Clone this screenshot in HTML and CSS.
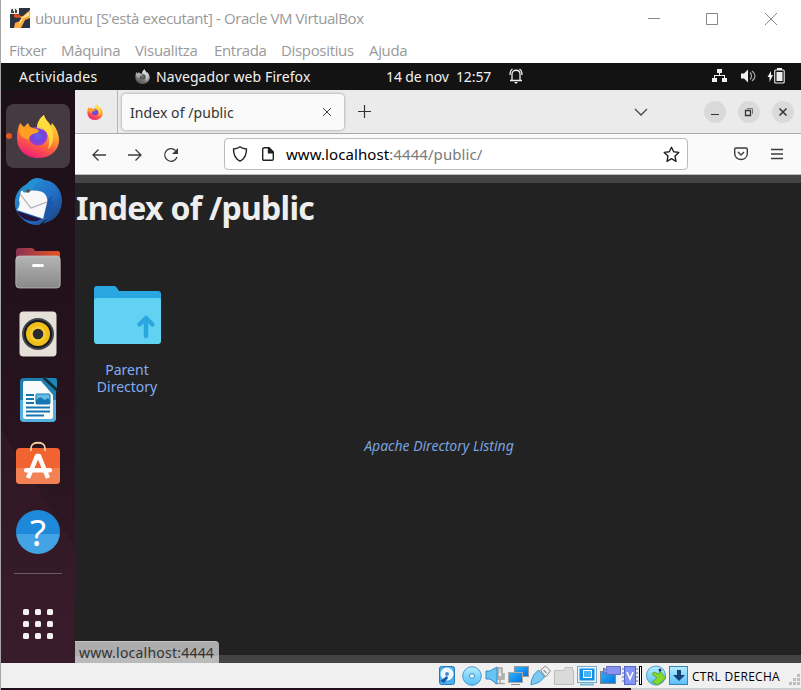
FILE: index.html
```html
<!DOCTYPE html>
<html lang="ca">
<head>
<meta charset="utf-8">
<title>ubuuntu - Oracle VM VirtualBox</title>
<link rel="stylesheet" href="styles.css">
</head>
<body>
<svg width="0" height="0" class="defs" aria-hidden="true">
  <defs>
    <linearGradient id="fire" x1=".8" y1="0" x2=".35" y2="1"><stop offset="0" stop-color="#fff04a"/><stop offset=".35" stop-color="#ffb02c"/><stop offset=".65" stop-color="#ff653c"/><stop offset="1" stop-color="#f01e78"/></linearGradient>
    <radialGradient id="globe"><stop offset="0" stop-color="#6264ed"/><stop offset=".6" stop-color="#7542db"/><stop offset="1" stop-color="#9a40cf"/></radialGradient>
    <linearGradient id="bird" x1="0" y1="0" x2="1" y2="1"><stop offset="0" stop-color="#259bd8"/><stop offset=".6" stop-color="#236cc3"/><stop offset="1" stop-color="#18386e"/></linearGradient>
    <linearGradient id="files" x1="0" y1="0" x2="0" y2="1"><stop offset="0" stop-color="#b4b4b4"/><stop offset="1" stop-color="#898989"/></linearGradient>
    <linearGradient id="tab" x1="0" y1="0" x2="1" y2="0"><stop offset="0" stop-color="#8b3055"/><stop offset="1" stop-color="#e95420"/></linearGradient>
    <linearGradient id="blue" x1="0" y1="0" x2="0" y2="1"><stop offset="0" stop-color="#b4edff"/><stop offset="1" stop-color="#58bff7"/></linearGradient>
    <linearGradient id="screen" x1="0" y1="0" x2="1" y2="1"><stop offset="0" stop-color="#33b4ff"/><stop offset="1" stop-color="#0072dc"/></linearGradient>
    <symbol id="firefox" viewBox="0 0 44 44">
      <path fill="url(#fire)" d="M4 9l4 4 4-4 2 4 7 2c0-6 3-11 7-14 1 5 5 7 7 11l1-3c7 8 9 18 5 25-4 7-11 10-19 10C9 44 1 35 1 24 1 18 2 13 4 9z"/>
      <circle cx="22" cy="22" r="9.500" fill="url(#globe)"/>
      <path fill="#ffa024" d="M4 11l4 3 4-3 3 3c4 0 7 1 8 3-1 2-4 2-6 3-3 1-4 3-4 6-4-1-8-3-10-8z"/>
      <path fill="#ffdf3f" d="M21 14c0-6 3-10 7-13 1 5 5 7 7 12l2 6c1 7-1 13-5 16 2-8 1-15-3-18-2-2-5-2-8-3z" opacity=".85"/>
    </symbol>
  </defs>
</svg>
<div class="vm">
  <header class="title">
    <svg class="vbicon" viewBox="0 0 20 20"><path fill="#2c3340" d="M0 0h20v20H0z"/><path fill="#e54a18" d="M4 6l7 1-4 3-3-1z"/><path fill="#ffad3f" d="M20 2v8l-5 2-4 8H4l1-5 5-2 3-5zM7 9l6-1-1 2z"/><path fill="#ffe29b" d="M19 4v4l-6 2-4 8 1-6 4-4z"/><path fill="#eee" d="M0 0h9v6H0z"/><path fill="#444" d="M2 1h1v2h1v2H1V2zM5 1h1v1h1v3H5z"/></svg>
    <span class="caption">ubuuntu [S'està executant] - Oracle VM VirtualBox</span>
    <svg class="winbtns" viewBox="0 0 130 16" fill="none" stroke="#888"><path d="M0 7.500h12M58.500 2.500h11v11h-11zM117 2l12 12M129 2l-12 12"/></svg>
  </header>
  <nav class="menu"><span class="m1">Fitxer</span><span class="m2">Màquina</span><span class="m3">Visualitza</span><span class="m4">Entrada</span><span class="m5">Dispositius</span><span class="m6">Ajuda</span></nav>
  <div class="topbar">
    <span class="activities">Actividades</span>
    <svg class="ffgray" viewBox="0 0 44 44"><use href="#firefox"/></svg>
    <span class="appname">Navegador web Firefox</span>
    <span class="clock">14 de nov&nbsp; 12:57</span>
    <svg class="bell" viewBox="0 0 14 16" fill="none" stroke="#eee" stroke-width="1.300"><path d="M1 12.500h12M3 12V6c0-5 8-5 8 0v6M1 7c0-3 .8-5 2.500-6M13 7c0-3-.8-5-2.500-6"/><path d="M5 14h4l-2 2z" fill="#eee" stroke="none"/></svg>
    <svg class="tray" viewBox="0 0 74 16"><g fill="#f0f0f0"><path d="M6 1h5v4H6zM1 10h5v4H1zM11 10h5v4h-5z"/><path d="M8 5h1v2h5v3h-1V8H4v2H3V7h5zM30 5.500h3l4-4v13l-4-4h-3z"/><path d="M60 3l-3.500 6h2v5l3.500-7h-2zM66 0h5v2h-5zM65.500 4h6v9h-6z"/></g><rect x="63.700" y="2" width="9.500" height="13" rx="1" fill="none" stroke="#f0f0f0" stroke-width="1.100"/><path d="M39 4.500c2 2 2 5 0 7M41 3c4 3 4 7 0 10" fill="none" stroke="#aaa" stroke-width="1.200"/></svg>
  </div>
  <div class="desktop">
    <aside class="dock">
      <div class="active"><i></i><svg width="44" height="44"><use href="#firefox"/></svg></div>
      <svg class="thunder" width="50" height="50" viewBox="0 0 50 50"><path fill="url(#bird)" d="M14 7C19 0 27 0 31 3c12 1 18 11 18 21 0 9-5 17-12 20l-7 3 4-5-8 6c-10 1-19-6-23-15C-1 21 6 10 14 7z"/><path fill="#f8f8f8" d="M8 14c7 0 19-2 24 3 4 5 4 17-1 25L4 33c3-4 3-7 2-10z"/><path d="M7 17l11 14 16-6" fill="none" stroke="#a9abb0" stroke-width="1.200"/><path fill="#2592d0" d="M10 15C12 6 20 0 29 4c-6 1-9 4-9 8-4 4-7 4-10 3z"/><path fill="#1c56a8" d="M35 22l5-3-3 7 5-3-4 8 4-2-6 10-6 3z"/><circle cx="15" cy="14" r="1.800" fill="#6f463c"/><path fill="#24123f" d="M4 34l24 8-4 2C14 45 7 41 4 34z"/></svg>
      <svg class="filesico" width="46" height="42" viewBox="0 0 46 42"><path d="M1 4q0-3 3-3h12q3 0 4 3h23q2 0 2 3v12H1z" fill="url(#tab)"/><rect x=".8" y="9" width="44.400" height="32" rx="3.500" fill="url(#files)" stroke="#c6c6c6" stroke-width=".7"/><rect x="17" y="17" width="12" height="3" rx="1.500" fill="#fff"/></svg>
      <svg class="rhythm" width="38" height="46" viewBox="0 0 38 46"><rect x=".5" y=".5" width="37" height="45" rx="4" fill="#e5e1d8"/><circle cx="19" cy="23" r="16" fill="#44454c"/><circle cx="19" cy="23" r="14" fill="#171920"/><circle cx="19" cy="23" r="12" fill="#efbe19"/><circle cx="19" cy="23" r="8" fill="#f5cc31"/><circle cx="19" cy="23" r="5.300" fill="#292a2d"/></svg>
      <svg class="writer" width="38" height="46" viewBox="0 0 38 46"><rect x="1" y="1" width="36" height="44" rx="4" fill="#207fae"/><path d="M1 23h36v18q0 4-4 4H5q-4 0-4-4z" fill="#52b1df"/><path d="M4 6q0-2 2-2h16l12 14v22q0 2-2 2H6q-2 0-2-2z" fill="#f7fbfc"/><path d="M22 0h6l10 11v4z" fill="#102f40"/><path d="M27 1h9q2 0 2 2v8z" fill="#1d87b6"/><path d="M7 18h8M7 22h8M7 26h8M7 30.500h24M7 34.500h24M7 38.500h18" stroke="#1676af" stroke-width="2"/><rect x="17" y="17" width="14" height="10" rx="1" fill="#67bce5" stroke="#1676af"/><path d="M17 27v-4l4-3 5 3 3-2 2 3v3z" fill="#1676af"/></svg>
      <svg class="soft" width="46" height="44" viewBox="0 0 46 44"><rect x="1" y="7" width="44" height="36" rx="4" fill="#f16432"/><path d="M1 27h44v12q0 4-4 4H5q-4 0-4-4z" fill="#f28153"/><path d="M16 10V7c0-7 14-7 14 0v3" fill="none" stroke="#f4cf9b" stroke-width="1.800"/><path d="M13 37l9-22h2l9 22" fill="none" stroke="#fff" stroke-width="4.500" stroke-linejoin="round"/><rect x="9" y="27" width="28" height="4.500" rx="2" fill="#fff"/></svg>
      <div class="help">?</div>
      <hr>
      <svg class="apps" width="30" height="30" viewBox="0 0 30 30" fill="#f2f1f0"><rect width="6" height="6" rx="1.500"/><rect x="12" width="6" height="6" rx="1.500"/><rect x="24" width="6" height="6" rx="1.500"/><rect y="12" width="6" height="6" rx="1.500"/><rect x="12" y="12" width="6" height="6" rx="1.500"/><rect x="24" y="12" width="6" height="6" rx="1.500"/><rect y="24" width="6" height="6" rx="1.500"/><rect x="12" y="24" width="6" height="6" rx="1.500"/><rect x="24" y="24" width="6" height="6" rx="1.500"/></svg>
    </aside>
    <main class="browser">
      <div class="tabs">
        <div class="pinned"><svg width="16" height="16"><use href="#firefox"/></svg></div>
        <div class="tab"><span>Index of /public</span><svg width="10" height="10" viewBox="0 0 10 10" stroke="#444"><path d="M1 1l8 8M9 1L1 9"/></svg></div>
        <svg class="plus" width="13" height="13" viewBox="0 0 13 13" stroke="#333" stroke-width="1.200"><path d="M0 6.500h13M6.500 0v13"/></svg>
        <svg class="chev" width="14" height="8" viewBox="0 0 14 8" fill="none" stroke="#444" stroke-width="1.300"><path d="M1 1l6 6 6-6"/></svg>
        <div class="controls">
          <b><svg viewBox="0 0 22 22"><path d="M7 13.500h8"/></svg></b>
          <b><svg viewBox="0 0 22 22"><path d="M7.500 9.500h5v5h-5z" stroke-width="1.300"/><path d="M9 7.500h5.500V13" stroke="#777"/></svg></b>
          <b><svg viewBox="0 0 22 22"><path d="M7.500 7.500l7 7M14.500 7.500l-7 7" stroke-width="1.500"/></svg></b>
        </div>
      </div>
      <div class="toolbar">
        <svg class="nav" width="90" height="16" viewBox="0 0 90 16" fill="none" stroke="#3c3c3c" stroke-width="1.300"><path d="M15 8H2M7.500 2.500L2 8l5.500 5.500M37 8h13M44.500 2.500L50 8l-5.500 5.500M84.500 3.500A6.300 6.300 0 1 0 86 10"/><path d="M87 1v6h-6z" fill="#3c3c3c" stroke="none"/></svg>
        <div class="url">
          <svg width="16" height="16" viewBox="0 0 16 16" fill="none" stroke="#222" stroke-width="1.400"><path d="M8 .8q3 2.200 6.500 2.200 0 9-6.500 12.200Q1.500 12 1.500 3 5 3 8 .8z" stroke-linejoin="round"/></svg>
          <svg class="page" width="12" height="14" viewBox="0 0 12 14" fill="none" stroke="#222" stroke-width="1.400"><path d="M2.500.7H7L11.300 5v7q0 1.300-1.300 1.300H2Q.7 13.300.7 12V2Q.7.7 2.500.7z"/><path d="M6.500.7v5h5z" fill="#222"/></svg>
          <span class="address"><em>www.localhost</em>:4444/public/</span>
          <svg class="star" width="17" height="17" viewBox="0 0 17 17" fill="none" stroke="#222" stroke-width="1.400" stroke-linejoin="round"><path d="M8.500 1.200l2.200 4.600 5.100.6L12 10l1 5.300-4.500-2.600L4 15.300 5 10 1.200 6.400l5.100-.6z"/></svg>
        </div>
        <svg class="pocket" width="50" height="14" viewBox="0 0 50 14" fill="none" stroke="#3c3c3c" stroke-width="1.400"><path d="M2 1h10q1.300 0 1.300 1.300V6.500c0 8-12.600 8-12.600 0V2.300Q.7 1 2 1zM4 5l3 3 3-3" stroke-linejoin="round"/><path d="M37 2.500h12M37 7h12M37 11.500h12" stroke-width="1.300"/></svg>
      </div>
      <section class="content">
        <h1>Index of /public</h1>
        <a class="folder">
          <svg width="67" height="58" viewBox="0 0 67 58"><path fill="#2aa6e0" d="M0 3q0-3 3-3h17q2 0 3 2l2 3h39q3 0 3 3v12H0z"/><path fill="#62d2f2" d="M0 14q0-2 2-2h63q2 0 2 2v41q0 3-3 3H3q-3 0-3-3z"/><path d="M52 50V33M45.500 38.500L52 32l6.500 6.500" fill="none" stroke="#2aa6e0" stroke-width="4.500" stroke-linecap="round" stroke-linejoin="round"/></svg>
          <div class="label">Parent Directory</div>
        </a>
        <a class="listing">Apache Directory Listing</a>
        <div class="hover">www.localhost:4444</div>
      </section>
    </main>
  </div>
  <footer class="status">
    <svg class="devices" width="255" height="22" viewBox="0 0 255 22">
      <rect x="1.500" y="1.500" width="15" height="18" rx="2" fill="#4aafef" stroke="#2678b8"/><circle cx="9" cy="9" r="6.500" fill="#eef8ff"/><circle cx="9" cy="9" r="2" fill="#4b8fc4"/><path d="M2 16l7-5 1 2-4 5z" fill="#145aa8"/>
      <circle cx="34" cy="11" r="9.300" fill="url(#blue)" stroke="#4a98cc"/><circle cx="34" cy="11" r="2.500" fill="#e7f8ff" stroke="#398cc8"/>
      <path d="M60 3h4v9h-4zM58 8v6h8V8M62 14v4M57 18.500h10" fill="#d4d4d4" stroke="#a5a5a5" stroke-width="1.500"/><path d="M48 6h4l7-4v17l-7-5h-4z" fill="#69c3f3" stroke="#338cc6"/>
      <rect x="76.500" y="1.500" width="14" height="10" fill="url(#screen)" stroke="#999"/><rect x="70.500" y="7.500" width="14" height="10" fill="url(#screen)" stroke="#aaa"/><path d="M73 19.500h9" stroke="#888"/>
      <g transform="translate(-5.500 0)"><path d="M108 5l5-4 5 5-5 6z" fill="#eee" stroke="#888"/><path d="M106 5l6 7-5 5c-4 2-7 2-8.500 3 0-4 1-7 3.500-11z" fill="#7bcaf4" stroke="#3c91c8"/><path d="M111 5l3 3" stroke="#555"/></g>
      <path d="M116.500 19.500V5.500h9l2-3h7v3h1v14z" fill="#dadada" stroke="#bdbdbd"/>
      <rect x="139.500" y="1.500" width="19" height="16" fill="#e8f6ff" stroke="#7aa6bd"/><rect x="141.500" y="3.500" width="15" height="12" fill="#158ee8"/><rect x="145.500" y="5.500" width="8" height="7" fill="#46b4ff" stroke="#fff"/><path d="M142 19.500h14" stroke="#77b8d9" stroke-width="2"/>
      <rect x="162.500" y="6.500" width="15" height="12" fill="url(#screen)" stroke="#888"/><path d="M165.500 3l3 2V1.500h14v8h-14V7l-3 2z" fill="#8793ee" stroke="#5f6dba"/>
      <rect x="186.500" y="1.500" width="11" height="18" fill="#8394f2" stroke="#5667c5"/><path d="M184 4h2m-2 4h2m-2 4h2m-2 4h2M198 4h2m-2 4h2m-2 4h2m-2 4h2" stroke="#5667c5"/><path d="M189 7l3 7 3-7" stroke="#fff" stroke-width="1.600" fill="none"/><rect x="201.500" y="1.500" width="2" height="18" fill="#fff" stroke="#000"/>
      <circle cx="218" cy="10.500" r="9.500" fill="url(#blue)" stroke="#4f9ac3"/><path d="M216 7l5 2 1-3 6 7-8 7-6-3 5-4-5-4z" fill="#86d82e" stroke="#4b9820" stroke-width=".7"/><circle cx="222" cy="5" r="1.500" fill="#235"/>
      <rect x="231.500" y="1.500" width="18" height="18" fill="url(#blue)" stroke="#3c83b3"/><path d="M239 5h4v5h4l-6 6-6-6h4z" fill="#174078"/>
    </svg>
    <span class="host">CTRL DERECHA</span>
    <svg class="grip" width="11" height="11" viewBox="0 0 11 11" fill="#bebebe"><path d="M8 0h3v3H8zM4 4h3v3H4zM8 4h3v3H8zM0 8h3v3H0zM4 8h3v3H4zM8 8h3v3H8z"/></svg>
  </footer>
  <div class="below"></div>
</div>
</body>
</html>
```
FILE: styles.css
```css
* { box-sizing: border-box; }
body { margin: 0; width: 801px; height: 690px; overflow: hidden; background: #fff; font-family: "Noto Sans", sans-serif; }
svg { display: block; flex: none; }
.defs { position: absolute; }
span { white-space: nowrap; }
.vm { width: 801px; height: 690px; display: flex; flex-direction: column; border-left: 1px solid #a5a5a5; }
.title { height: 38px; display: flex; align-items: center; padding: 0 23px 0 9px; color: #999; font: 15px "Open Sans", sans-serif; }
.vbicon { width: 20px; height: 20px; margin-top: -2px; }
.caption { margin: -2px 0 0 5px; letter-spacing: -.41px; }
.winbtns { width: 130px; height: 16px; margin-left: auto; margin-top: -1px; }
.menu { height: 25px; display: flex; align-items: center; padding: 0 0 2px 8px; color: #999; font: 15px "Open Sans", sans-serif; letter-spacing: -.33px; }
.m1 { width: 52px; } .m2 { width: 74px; } .m3 { width: 79px; } .m4 { width: 67px; } .m5 { width: 88px; }
.topbar { height: 27px; background: #131313; display: flex; align-items: center; color: #f2f2f2; font-size: 14px; padding: 0 16px 1px 18px; }
.activities { width: 116px; letter-spacing: .35px; }
.ffgray { width: 15px; height: 15px; filter: grayscale(1); }
.appname { margin-left: 6px; width: 230px; letter-spacing: .1px; }
.clock { width: 123px; letter-spacing: -.1px; }
.bell { width: 14px; height: 16px; }
.tray { width: 74px; height: 16px; margin-left: auto; }
.desktop { height: 573px; display: flex; }
.dock { width: 74px; display: flex; flex-direction: column; align-items: center; background: linear-gradient(238deg, transparent 66%, rgba(255, 90, 150, .035) 66.3%), linear-gradient(#1c0f18, #24121c 45%, #321a27); padding-top: 14px; }
.active { width: 64px; height: 64px; border-radius: 8px; background: #453a42; display: grid; place-items: center; position: relative; }
.active i { position: absolute; left: 0; top: 29px; width: 6px; height: 6px; border-radius: 50%; background: #e95420; }
.thunder { margin-top: 9px; }
.filesico { margin-top: 20px; }
.rhythm { margin-top: 22px; }
.writer { margin-top: 20px; }
.soft { margin-top: 18px; }
.help { width: 44px; height: 44px; margin-top: 25px; border-radius: 50%; background: linear-gradient(#1e88d9 54%, #42a3e5 54%); color: #fff; font: 37px/43px "Noto Sans", sans-serif; text-align: center; }
.dock hr { width: 48px; height: 1px; border: 0; background: #6f5b66; margin: 19px 0 0; }
.apps { margin-top: 35px; }
.browser { width: 726px; display: flex; flex-direction: column; }
.tabs { height: 44px; background: #ebebeb; border-bottom: 1px solid #aaa; display: flex; align-items: center; }
.pinned { width: 43px; height: 43px; border-right: 1px solid #b5b5b5; display: flex; align-items: center; padding-left: 12px; }
.tab { width: 222px; height: 36px; margin-left: 4px; border-radius: 4px; background: #fafafa; box-shadow: 0 0 3px #888; display: flex; align-items: center; justify-content: space-between; padding: 1px 12px 0 8px; color: #333; font-size: 14px; letter-spacing: .07px; }
.plus { margin-left: 14px; }
.chev { margin-left: 263px; }
.controls { display: flex; gap: 12px; margin-left: 56px; }
.controls b { width: 22px; height: 22px; border-radius: 50%; background: #dadada; }
.controls svg { fill: none; stroke: #333; }
.toolbar { height: 41px; background: #fafafa; border-bottom: 1px solid #bbb; display: flex; align-items: center; }
.nav { margin-left: 16px; margin-top: 1px; }
.url { width: 464px; height: 32px; margin-left: 43px; border: 1px solid #bababa; border-radius: 4px; background: #fff; display: flex; align-items: center; padding: 0 7px 0 7px; }
.page { margin-left: 14px; }
.address { margin-left: 12px; color: #7b7b7b; font-size: 15px; letter-spacing: .08px; }
.address em { color: #000; font-style: normal; }
.star { margin-left: auto; }
.pocket { margin-left: 46px; }
.content { height: 488px; background: #222; border-top: 8px solid #444; border-bottom: 8px solid #444; position: relative; display: flex; flex-direction: column; align-items: flex-start; }
h1 { height: 51px; margin: 0; padding-left: 1px; color: #eee; font: bold 32px/50px "Noto Sans", sans-serif; letter-spacing: -.72px; white-space: nowrap; }
.folder { width: 67px; margin: 52px 0 0 18.500px; display: flex; flex-direction: column; align-items: center; color: #82acf4; font-size: 14px; line-height: 17px; }
.folder svg { margin-bottom: 17px; }
.label { width: 67px; text-align: center; }
.listing { align-self: center; color: #7ba1df; font-size: 14px; font-style: italic; line-height: 20px; margin: 41px 0 0 2px; }
.hover { position: absolute; left: 0; bottom: -8px; width: 144px; height: 22px; background: linear-gradient(#adadad 14px, #bababa 14px); border-top: 1px solid #c4c4c4; border-radius: 0 4px 0 0; color: #333; font-size: 14px; line-height: 21px; padding-left: 4px; letter-spacing: .22px; }
.status { height: 25px; background: #f0f0f0; display: flex; align-items: center; padding-left: 437px; font-size: 12px; color: #000; }
.devices { margin-top: 1px; }
.host { width: 97px; margin: 1px 0 0 -1px; font-family: "Open Sans", sans-serif; letter-spacing: .3px; }
.grip { margin-top: 7px; }
.below { height: 2px; background: linear-gradient(90deg, #21101c 630px, #ccc 630px); }
```
